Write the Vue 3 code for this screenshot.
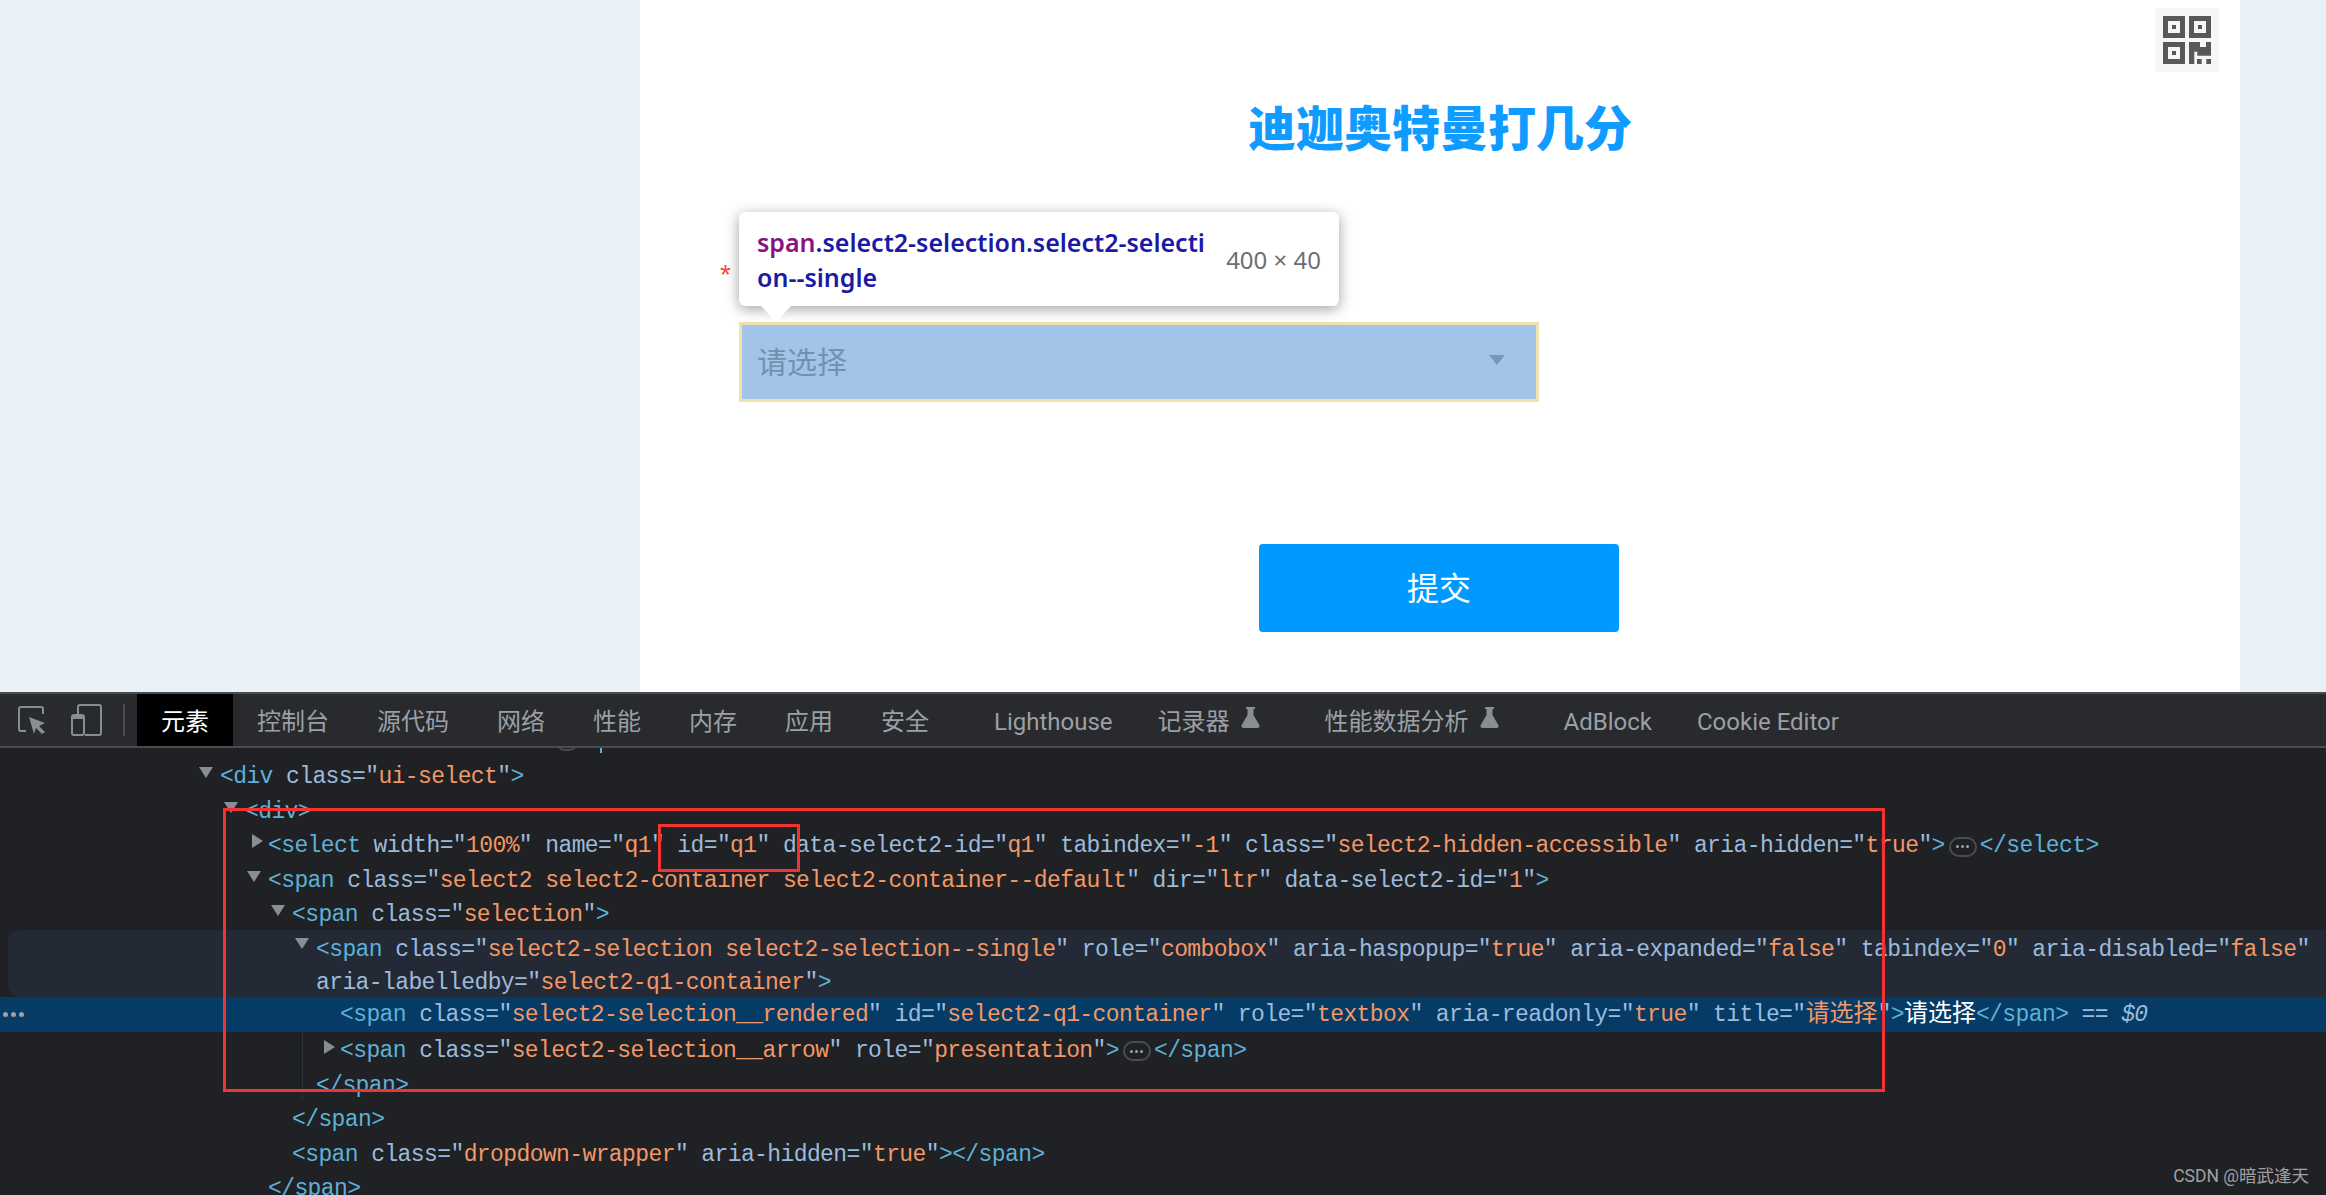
<script setup>
const tabs = [
  { label: '元素', active: true },
  { label: '控制台' },
  { label: '源代码' },
  { label: '网络' },
  { label: '性能' },
  { label: '内存' },
  { label: '应用' },
  { label: '安全', gap: 'spaced' },
  { label: 'Lighthouse', gap: 'snug' },
  { label: '记录器', flask: true, gap: 'wide' },
  { label: '性能数据分析', flask: true, gap: 'wide' },
  { label: 'AdBlock', gap: 'snug' },
  { label: 'Cookie Editor' }
]

const tokenRe = /(<\/?\w+|\/?>)|"([^"]*)"|(…)|(== \$0)|([^<>"…]+)/g

function tokenize(src) {
  const out = []
  for (const m of src.matchAll(tokenRe)) {
    if (m[1]) out.push({ c: 'tag', t: m[1] })
    else if (m[2] !== undefined) {
      out.push({ c: 'attr', t: '"' })
      out.push({ c: /[\u4e00-\u9fff]/.test(m[2]) ? 'val cjk' : 'val', t: m[2] })
      out.push({ c: 'attr', t: '"' })
    } else if (m[3]) out.push({ c: 'pill', t: '' })
    else if (m[4]) out.push({ c: 'dollar', t: ' == $0' })
    else if (/[\u4e00-\u9fff]/.test(m[5])) out.push({ c: 'txt cjk', t: m[5] })
    else out.push({ c: 'attr', t: m[5] })
  }
  return out
}

const row = (x, src, arrow) => ({ x, arrow, tokens: tokenize(src) })

const before = [
  row(220, '<div class="ui-select">', 'down'),
  row(245, '<div>', 'down'),
  row(268, '<select width="100%" name="q1" id="q1" data-select2-id="q1" tabindex="-1" class="select2-hidden-accessible" aria-hidden="true">…</select>', 'right'),
  row(268, '<span class="select2 select2-container select2-container--default" dir="ltr" data-select2-id="1">', 'down'),
  row(292, '<span class="selection">', 'down')
]
const hovered = [
  row(316, '<span class="select2-selection select2-selection--single" role="combobox" aria-haspopup="true" aria-expanded="false" tabindex="0" aria-disabled="false"', 'down'),
  row(316, 'aria-labelledby="select2-q1-container">')
]
const selected = row(340, '<span class="select2-selection__rendered" id="select2-q1-container" role="textbox" aria-readonly="true" title="请选择">请选择</span>== $0')
const after = [
  row(340, '<span class="select2-selection__arrow" role="presentation">…</span>', 'right'),
  row(316, '</span>'),
  row(292, '</span>'),
  row(292, '<span class="dropdown-wrapper" aria-hidden="true"></span>'),
  row(268, '</span>')
]

const indent = (r, shift = 0) => ({ paddingLeft: r.x - shift + 'px' })
const arrowAt = (r, shift = 0) => ({ left: r.x - shift - (r.arrow === 'down' ? 21 : 16) + 'px' })
</script>

<template>
  <div class="screen">
    <section class="page">
      <main class="panel">
        <div class="qr">
          <svg width="48" height="48" viewBox="0 0 48 48" fill="#585858">
            <path fill-rule="evenodd" d="M0 0h22v22H0zM5 5v12h12V5zM9 9v4h4V9z" />
            <path fill-rule="evenodd" d="M26 0h22v22H26zM31 5v12h12V5zM35 9v4h4V9z" />
            <path fill-rule="evenodd" d="M0 26h22v22H0zM5 31v12h12V31zM9 35v4h4v-4z" />
            <path d="M26 26h11v5h6v-5h5v13.700H34.300v-4h-3V48H26z" />
            <path d="M34 43h4.700v5H34zM43.300 43H48v5h-4.700z" />
          </svg>
        </div>
        <h1 class="title">迪迦奥特曼打几分</h1>
        <div class="field">
          <span class="star">*</span>
          <div class="select">
            <span class="placeholder">请选择</span>
            <span class="caret"></span>
          </div>
          <div class="tip">
            <div class="tip-name"><b class="tip-tag">span</b>.select2-selection.select2-selecti<br />on--single</div>
            <div class="tip-size">400 × 40</div>
            <span class="tip-arrow"></span>
          </div>
        </div>
        <button class="submit">提交</button>
      </main>
    </section>

    <section class="devtools">
      <nav class="toolbar">
        <svg class="ic-inspect" width="30" height="30" viewBox="0 0 30 30">
          <path d="M9 26H4a2 2 0 0 1-2-2V4a2 2 0 0 1 2-2h20a2 2 0 0 1 2 2v5" fill="none" stroke="#8a8d91" stroke-width="2" />
          <path d="M12 12l16 6-6 3 6 6-3 2-6-6-2 6z" fill="#8a8d91" />
        </svg>
        <svg class="ic-device" width="32" height="32" viewBox="0 0 32 32">
          <path d="M8 10V3a2 2 0 0 1 2-2h19a2 2 0 0 1 2 2v26a2 2 0 0 1-2 2H15" fill="none" stroke="#8a8d91" stroke-width="2" />
          <rect x="2" y="11" width="12" height="20" rx="2" fill="none" stroke="#8a8d91" stroke-width="2" />
          <path d="M2 11h12v4H2z" fill="#8a8d91" />
        </svg>
        <span class="sep"></span>
        <template v-for="t in tabs" :key="t.label">
          <span class="tab" :class="[t.gap, { active: t.active }]">
            <span class="tab-text">{{ t.label }}</span>
            <svg v-if="t.flask" class="flask" width="19" height="21" viewBox="0 0 19 21">
              <path d="M5 0h9v2h-1.500v6l5.800 10a2 2 0 0 1-1.800 3H2.500a2 2 0 0 1-1.800-3L6.500 8V2H5z" fill="#8a8d91" />
            </svg>
          </span>
        </template>
      </nav>

      <div class="code">
        <span class="clip-pill"></span>
        <span class="clip-tick"></span>

        <div v-for="(r, i) in before" :key="'b' + i" class="line" :style="indent(r)">
          <i v-if="r.arrow" :class="'arrow ' + r.arrow" :style="arrowAt(r)"></i>
          <template v-for="(k, j) in r.tokens" :key="j"><span v-if="k.c === 'pill'" class="pill"><em></em><em></em><em></em></span><span v-else :class="k.c">{{ k.t }}</span></template>
        </div>

        <div class="hover">
          <div v-for="(r, i) in hovered" :key="'h' + i" class="line tight" :style="indent(r, 8)">
            <i v-if="r.arrow" :class="'arrow ' + r.arrow" :style="arrowAt(r, 8)"></i>
            <template v-for="(k, j) in r.tokens" :key="j"><span :class="k.c">{{ k.t }}</span></template>
          </div>
        </div>

        <div class="line current" :style="indent(selected)">
          <span class="more"><em></em><em></em><em></em></span>
          <template v-for="(k, j) in selected.tokens" :key="j"><span :class="k.c">{{ k.t }}</span></template>
        </div>

        <div v-for="(r, i) in after" :key="'a' + i" class="line low" :style="indent(r)">
          <i v-if="r.arrow" :class="'arrow ' + r.arrow" :style="arrowAt(r)"></i>
          <template v-for="(k, j) in r.tokens" :key="j"><span v-if="k.c === 'pill'" class="pill"><em></em><em></em><em></em></span><span v-else :class="k.c">{{ k.t }}</span></template>
        </div>

        <span class="guide"></span>
        <span class="mark mark-big"></span>
        <span class="mark mark-small"></span>
        <span class="watermark">CSDN @暗武逢天</span>
      </div>
    </section>
  </div>
</template>

<style scoped>
.screen {
  width: 2326px;
  height: 1195px;
  display: flex;
  flex-direction: column;
  overflow: hidden;
  font-family: "Noto Sans", "Noto Sans CJK SC", sans-serif;
}
.page {
  height: 692px;
  flex: none;
  background: #e9f0f8;
  display: flex;
  padding-left: 640px;
  box-sizing: border-box;
}
.panel {
  position: relative;
  width: 1600px;
  background: #fff;
  display: flex;
  flex-direction: column;
}
.qr {
  position: absolute;
  top: 8px;
  right: 21px;
  width: 64px;
  height: 64px;
  background: #f6f6f6;
  display: flex;
  align-items: center;
  justify-content: center;
}
.title {
  margin: 91px 0 0;
  text-align: center;
  font-family: "Noto Sans CJK SC", sans-serif;
  font-size: 48px;
  font-weight: 900;
  line-height: 68px;
  color: #0f9bff;
}
.field {
  position: relative;
  margin: 163px 0 0 99px;
  width: 800px;
}
.star {
  position: absolute;
  left: -19px;
  top: -62px;
  font-size: 28px;
  line-height: 30px;
  color: #f44;
  font-family: "Liberation Sans", sans-serif;
}
.select {
  height: 80px;
  box-sizing: border-box;
  border: 3px solid #f0e2ae;
  background: #a1c4e8;
  display: flex;
  align-items: center;
  justify-content: space-between;
  padding: 0 31px 0 15px;
}
.placeholder {
  font-size: 30px;
  line-height: 40px;
  margin-top: -5px;
  color: #7490b0;
  font-family: "Noto Sans CJK SC", sans-serif;
  font-weight: 400;
}
.caret {
  width: 0;
  height: 0;
  margin-top: -4px;
  border-left: 8px solid transparent;
  border-right: 8px solid transparent;
  border-top: 10px solid #7c97b5;
}
.tip {
  position: absolute;
  left: 0;
  top: -110px;
  width: 600px;
  height: 94px;
  box-sizing: border-box;
  background: #fff;
  border-radius: 6px;
  box-shadow: 0 3px 14px rgba(0, 0, 0, 0.38);
  padding: 13px 18px 0;
  display: flex;
  justify-content: space-between;
}
.tip-name {
  font-size: 25px;
  line-height: 35px;
  font-weight: 600;
  color: #1a1aa6;
  white-space: nowrap;
}
.tip-tag {
  color: #881280;
  font-weight: 600;
}
.tip-size {
  font-size: 24px;
  line-height: 70px;
  color: #6e6e6e;
  white-space: nowrap;
}
.tip-arrow {
  position: absolute;
  left: 22px;
  bottom: -16px;
  width: 0;
  height: 0;
  border-left: 15px solid transparent;
  border-right: 15px solid transparent;
  border-top: 16px solid #fff;
}
.submit {
  margin: 142px 0 0 619px;
  width: 360px;
  height: 88px;
  padding: 0 0 4px;
  border: 0;
  border-radius: 4px;
  background: #0099ff;
  color: #fff;
  font-family: "Noto Sans CJK SC", sans-serif;
  font-size: 32px;
}

.devtools {
  flex: 1;
  background: #202124;
  display: flex;
  flex-direction: column;
  min-height: 0;
}
.toolbar {
  height: 56px;
  flex: none;
  box-sizing: border-box;
  border-top: 2px solid #4a4c50;
  border-bottom: 2px solid #4a4c50;
  background: #292a2d;
  display: flex;
  align-items: center;
  padding-left: 17px;
  color: #9aa0a6;
  font-family: Roboto, "Noto Sans CJK SC", sans-serif;
  font-size: 24px;
}
.ic-device { margin-left: 23px; }
.sep {
  width: 2px;
  height: 32px;
  background: #4a4c50;
  margin: 0 12px 0 21px;
}
.tab {
  display: flex;
  align-items: center;
  height: 100%;
  padding: 0 24px;
  white-space: nowrap;
  line-height: 1;
}
.tab-text { padding-top: 3px; }
.tab.active { background: #000; color: #fff; }
.tab.spaced { margin-right: 17px; }
.tab.wide { margin-right: 30px; }
.tab.snug { margin-right: -3px; }
.flask { margin-left: 11px; margin-top: -6px; margin-right: -13px; }

.code {
  position: relative;
  flex: 1;
  overflow: hidden;
  padding-top: 11px;
  font-family: "Liberation Mono", "Noto Sans CJK SC", monospace;
  font-size: 23px;
  letter-spacing: -0.6px;
  color: #9bbbdc;
}
.line {
  position: relative;
  height: 34.6px;
  line-height: 36px;
  white-space: pre;
}
.line.tight {
  height: 33.5px;
  line-height: 40px;
}
.line.low {
  height: 34.6px;
  line-height: 38px;
}
.line.low .arrow { top: 8px; }
.hover {
  margin: -2px 0 0 8px;
  background: #242a35;
  border-radius: 12px 0 0 12px;
}
.line.current {
  background: #063b66;
  height: 35px;
  line-height: 37px;
}
.tag { color: #5db0d7; }
.attr { color: #9bbbdc; }
.val { color: #f29766; }
.txt { color: #fff; }
.cjk {
  font-family: "Noto Sans CJK SC", sans-serif;
  font-size: 24px;
  line-height: 1;
  letter-spacing: 0;
}
.dollar {
  color: #9bbbdc;
  font-style: italic;
}
.arrow {
  position: absolute;
  width: 0;
  height: 0;
}
.arrow.down {
  top: 8px;
  border-left: 7px solid transparent;
  border-right: 7px solid transparent;
  border-top: 11px solid #8a8d91;
}
.arrow.right {
  top: 6px;
  border-top: 7px solid transparent;
  border-bottom: 7px solid transparent;
  border-left: 11px solid #8a8d91;
}
.pill {
  display: inline-flex;
  align-items: center;
  justify-content: center;
  gap: 2px;
  width: 28px;
  height: 20px;
  box-sizing: border-box;
  margin: 0 3px 0 4px;
  border: 2px solid #4a4c50;
  border-radius: 10px;
  vertical-align: 4px;
}
.pill em,
.more em {
  display: block;
  width: 3px;
  height: 3px;
  border-radius: 50%;
  background: #9aa0a6;
}
.more {
  position: absolute;
  left: 3px;
  top: 15px;
  display: flex;
  gap: 3px;
}
.more em {
  width: 5px;
  height: 5px;
}
.clip-pill {
  position: absolute;
  left: 555px;
  top: -17px;
  width: 24px;
  height: 20px;
  box-sizing: border-box;
  border: 2px solid #4a4c50;
  border-radius: 10px;
}
.clip-tick {
  position: absolute;
  left: 600px;
  top: 0;
  width: 2px;
  height: 5px;
  background: #5db0d7;
}
.guide {
  position: absolute;
  left: 302px;
  top: 284px;
  width: 1px;
  height: 68px;
  background: #2c3036;
}
.mark {
  position: absolute;
  box-sizing: border-box;
  border: 3px solid #f33333;
}
.mark-big {
  left: 223px;
  top: 60px;
  width: 1662px;
  height: 284px;
}
.mark-small {
  left: 658px;
  top: 76px;
  width: 142px;
  height: 48px;
}
.watermark {
  position: absolute;
  right: 17px;
  bottom: 8px;
  font-family: Roboto, "Noto Sans CJK SC", sans-serif;
  font-size: 17.5px;
  letter-spacing: 0;
  line-height: 22px;
  color: #a0a0a0;
}
</style>
